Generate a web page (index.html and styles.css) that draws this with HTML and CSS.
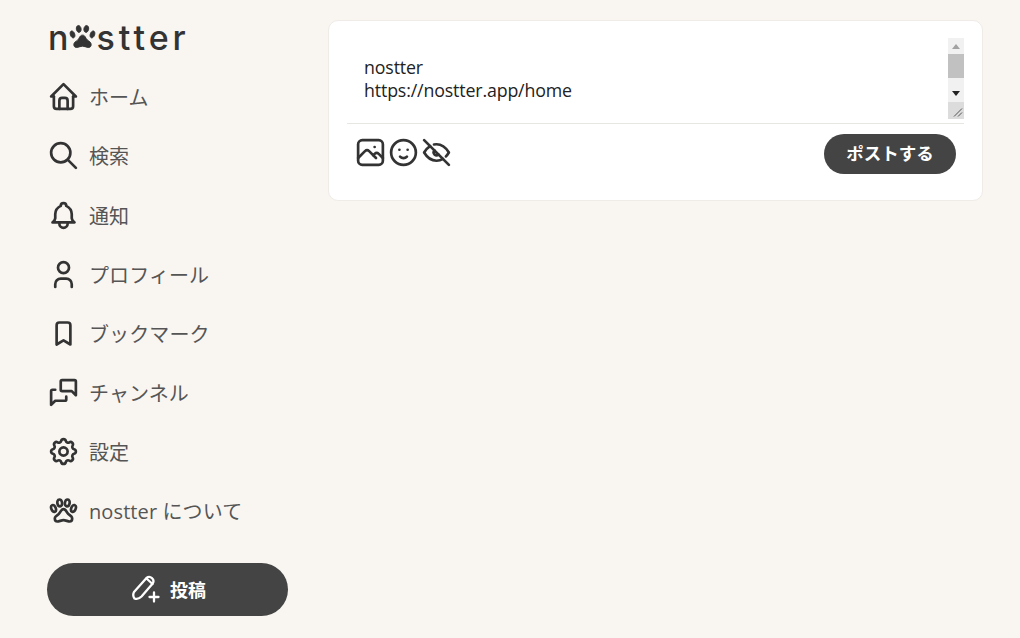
FILE: index.html
```html
<!DOCTYPE html>
<html lang="ja">
<head>
<meta charset="utf-8">
<title>nostter</title>
<link rel="stylesheet" href="styles.css">
</head>
<body>
<div class="page">
  <aside class="sidebar">
    <div class="logo">
      <span>n</span>
      <svg class="logo-paw" viewBox="0 0 24 24"><path d="M14.7 13.5c-1.1 -2 -1.441 -2.5 -2.7 -2.5c-1.259 0 -1.736 .755 -2.836 2.747c-.942 1.703 -2.846 1.845 -3.321 3.291c-.097 .265 -.145 .677 -.143 .962c0 1.176 .787 2 1.8 2c1.259 0 3 -1 4.5 -1s3.241 1 4.5 1c1.013 0 1.8 -.823 1.8 -2c0 -.285 -.049 -.697 -.146 -.962c-.475 -1.451 -2.512 -1.835 -3.454 -3.538z"/><path d="M20.188 8.082a1.039 1.039 0 0 0 -.406 -.082h-.015c-.735 .012 -1.56 .75 -1.993 1.866c-.519 1.335 -.28 2.7 .538 3.052c.129 .055 .267 .082 .406 .082c.739 0 1.575 -.742 2.011 -1.866c.516 -1.335 .273 -2.7 -.54 -3.052z"/><path d="M9.474 9c.055 0 .109 0 .163 -.011c.944 -.128 1.533 -1.346 1.32 -2.722c-.203 -1.297 -1.047 -2.267 -1.932 -2.267c-.055 0 -.109 0 -.163 .011c-.944 .128 -1.533 1.346 -1.32 2.722c.204 1.293 1.048 2.267 1.933 2.267z"/><path d="M16.456 6.733c.214 -1.376 -.375 -2.594 -1.32 -2.722a1.164 1.164 0 0 0 -.162 -.011c-.885 0 -1.728 .97 -1.93 2.267c-.214 1.376 .375 2.594 1.32 2.722c.054 .007 .108 .011 .162 .011c.885 0 1.73 -.974 1.93 -2.267z"/><path d="M5.69 12.918c.816 -.352 1.054 -1.719 .536 -3.052c-.436 -1.124 -1.271 -1.866 -2.009 -1.866c-.14 0 -.277 .027 -.407 .082c-.816 .352 -1.054 1.719 -.536 3.052c.436 1.124 1.271 1.866 2.009 1.866c.14 0 .277 -.027 .407 -.082z"/></svg>
      <span>stter</span>
    </div>
    <nav class="nav">
      <a class="nav-item"><svg class="icon" viewBox="0 0 24 24"><path d="M5 12l-2 0l9 -9l9 9l-2 0"/><path d="M5 12v7a2 2 0 0 0 2 2h10a2 2 0 0 0 2 -2v-7"/><path d="M9 21v-6a2 2 0 0 1 2 -2h2a2 2 0 0 1 2 2v6"/></svg><span>ホーム</span></a>
      <a class="nav-item"><svg class="icon" viewBox="0 0 24 24"><path d="M10 10m-7 0a7 7 0 1 0 14 0a7 7 0 1 0 -14 0"/><path d="M21 21l-6 -6"/></svg><span>検索</span></a>
      <a class="nav-item"><svg class="icon" viewBox="0 0 24 24"><path d="M10 5a2 2 0 1 1 4 0a7 7 0 0 1 4 6v3a4 4 0 0 0 2 3h-16a4 4 0 0 0 2 -3v-3a7 7 0 0 1 4 -6"/><path d="M9 17v1a3 3 0 0 0 6 0v-1"/></svg><span>通知</span></a>
      <a class="nav-item"><svg class="icon" viewBox="0 0 24 24"><path d="M8 7a4 4 0 1 0 8 0a4 4 0 0 0 -8 0"/><path d="M6 21v-2a4 4 0 0 1 4 -4h4a4 4 0 0 1 4 4v2"/></svg><span>プロフィール</span></a>
      <a class="nav-item"><svg class="icon" viewBox="0 0 24 24"><path d="M9 4h6a2 2 0 0 1 2 2v14l-5 -3l-5 3v-14a2 2 0 0 1 2 -2"/></svg><span>ブックマーク</span></a>
      <a class="nav-item"><svg class="icon" viewBox="0 0 24 24"><path d="M21 14l-3 -3h-7a1 1 0 0 1 -1 -1v-6a1 1 0 0 1 1 -1h9a1 1 0 0 1 1 1v10"/><path d="M14 15v2a1 1 0 0 1 -1 1h-7l-3 3v-10a1 1 0 0 1 1 -1h2"/></svg><span>チャンネル</span></a>
      <a class="nav-item"><svg class="icon" viewBox="0 0 24 24"><path d="M10.325 4.317c.426 -1.756 2.924 -1.756 3.35 0a1.724 1.724 0 0 0 2.573 1.066c1.543 -.94 3.31 .826 2.37 2.37a1.724 1.724 0 0 0 1.065 2.572c1.756 .426 1.756 2.924 0 3.35a1.724 1.724 0 0 0 -1.066 2.573c.94 1.543 -.826 3.31 -2.37 2.37a1.724 1.724 0 0 0 -2.572 1.065c-.426 1.756 -2.924 1.756 -3.35 0a1.724 1.724 0 0 0 -2.573 -1.066c-1.543 .94 -3.31 -.826 -2.37 -2.37a1.724 1.724 0 0 0 -1.065 -2.572c-1.756 -.426 -1.756 -2.924 0 -3.35a1.724 1.724 0 0 0 1.066 -2.573c-.94 -1.543 .826 -3.31 2.37 -2.37c1 .608 2.296 .07 2.572 -1.065"/><path d="M9 12a3 3 0 1 0 6 0a3 3 0 0 0 -6 0"/></svg><span>設定</span></a>
      <a class="nav-item"><svg class="icon" viewBox="0 0 24 24"><path d="M14.7 13.5c-1.1 -2 -1.441 -2.5 -2.7 -2.5c-1.259 0 -1.736 .755 -2.836 2.747c-.942 1.703 -2.846 1.845 -3.321 3.291c-.097 .265 -.145 .677 -.143 .962c0 1.176 .787 2 1.8 2c1.259 0 3 -1 4.5 -1s3.241 1 4.5 1c1.013 0 1.8 -.823 1.8 -2c0 -.285 -.049 -.697 -.146 -.962c-.475 -1.451 -2.512 -1.835 -3.454 -3.538z"/><path d="M20.188 8.082a1.039 1.039 0 0 0 -.406 -.082h-.015c-.735 .012 -1.56 .75 -1.993 1.866c-.519 1.335 -.28 2.7 .538 3.052c.129 .055 .267 .082 .406 .082c.739 0 1.575 -.742 2.011 -1.866c.516 -1.335 .273 -2.7 -.54 -3.052z"/><path d="M9.474 9c.055 0 .109 0 .163 -.011c.944 -.128 1.533 -1.346 1.32 -2.722c-.203 -1.297 -1.047 -2.267 -1.932 -2.267c-.055 0 -.109 0 -.163 .011c-.944 .128 -1.533 1.346 -1.32 2.722c.204 1.293 1.048 2.267 1.933 2.267z"/><path d="M16.456 6.733c.214 -1.376 -.375 -2.594 -1.32 -2.722a1.164 1.164 0 0 0 -.162 -.011c-.885 0 -1.728 .97 -1.93 2.267c-.214 1.376 .375 2.594 1.32 2.722c.054 .007 .108 .011 .162 .011c.885 0 1.73 -.974 1.93 -2.267z"/><path d="M5.69 12.918c.816 -.352 1.054 -1.719 .536 -3.052c-.436 -1.124 -1.271 -1.866 -2.009 -1.866c-.14 0 -.277 .027 -.407 .082c-.816 .352 -1.054 1.719 -.536 3.052c.436 1.124 1.271 1.866 2.009 1.866c.14 0 .277 -.027 .407 -.082z"/></svg><span>nostter について</span></a>
    </nav>
    <button class="compose"><svg class="compose-icon" viewBox="0 0 30 28"><path d="M2 17 14.500 3a4.200 4.200 0 0 1 6.200 5.500L9.500 21.500c-2 2-4.500 3-7 2-1.500-2-1.500-4.500-.5-6.500z"/><path d="M14.500 3.500 20.500 9"/><path d="M17.500 22h9M22 17.500v9"/></svg><span>投稿</span></button>
  </aside>
  <main class="main">
    <section class="card">
      <div class="editor">
        <div class="editor-text">nostter<br>https://nostter.app/home</div>
        <div class="scrollbar">
          <div class="sb-btn"><i class="arrow-up"></i></div>
          <div class="sb-thumb"></div>
          <div class="sb-track"></div>
          <div class="sb-btn sb-down"><i class="arrow-down"></i></div>
          <div class="sb-corner"><svg viewBox="0 0 16 16"><path d="M6 14 14 6M10 14l4-4"/></svg></div>
        </div>
      </div>
      <div class="toolbar">
        <div class="tools">
          <svg class="icon" viewBox="0 0 24 24"><path d="M15 8h.01"/><path d="M3 6a3 3 0 0 1 3 -3h12a3 3 0 0 1 3 3v12a3 3 0 0 1 -3 3h-12a3 3 0 0 1 -3 -3v-12z"/><path d="M3 16l5 -5c.928 -.893 2.072 -.893 3 0l5 5"/><path d="M14 14l1 -1c.928 -.893 2.072 -.893 3 0l3 3"/></svg>
          <svg class="icon" viewBox="0 0 24 24"><path d="M12 12m-9 0a9 9 0 1 0 18 0a9 9 0 1 0 -18 0"/><path d="M9 10l.01 0"/><path d="M15 10l.01 0"/><path d="M9.500 15a3.500 3.500 0 0 0 5 0"/></svg>
          <svg class="icon" viewBox="0 0 24 24"><path d="M10.585 10.587a2 2 0 0 0 2.829 2.828"/><path d="M16.681 16.673a8.717 8.717 0 0 1 -4.681 1.327c-3.6 0 -6.6 -2 -9 -6c1.272 -2.12 2.712 -3.678 4.32 -4.674m2.86 -1.146a9.055 9.055 0 0 1 1.82 -.18c3.6 0 6.6 2 9 6c-.666 1.11 -1.379 2.067 -2.138 2.87"/><path d="M3 3l18 18"/></svg>
        </div>
        <button class="post">ポストする</button>
      </div>
    </section>
  </main>
</div>
</body>
</html>
```
FILE: styles.css
```css
* { box-sizing: border-box; }
html, body { margin: 0; height: 100%; }
body {
  background: #f9f6f2;
  color: #333;
  font-family: "Open Sans", "Noto Sans CJK JP", sans-serif;
  overflow: hidden;
}
.page {
  display: flex;
  align-items: flex-start;
  gap: 40px;
  padding: 20px 37px 0 47px;
}
.sidebar {
  width: 241px;
  flex: none;
  display: flex;
  flex-direction: column;
}
.logo {
  height: 47.175px;
  display: flex;
  align-items: flex-start;
  padding: 0 0 0 1px;
  font-family: "Inter", sans-serif;
  font-size: 34px;
  font-weight: 500;
  line-height: 36px;
  letter-spacing: 4px;
  color: #333;
}
.logo-paw {
  width: 33px;
  height: 33px;
  margin: 0 -3px 0 -6px;
  flex: none;
  fill: #333;
  stroke: #333;
  stroke-width: .7;
}
.nav { display: flex; flex-direction: column; }
.nav-item {
  display: flex;
  align-items: center;
  gap: 9px;
  height: 59.150px;
  font-size: 20px;
  letter-spacing: .1px;
  color: #555;
}
.icon {
  width: 33px;
  height: 33px;
  flex: none;
  fill: none;
  stroke: #333;
  stroke-width: 1.950;
  stroke-linecap: round;
  stroke-linejoin: round;
}
.compose {
  margin-top: 22.625px;
  height: 53px;
  width: 241px;
  border: 0;
  border-radius: 27px;
  background: #444;
  color: #fff;
  display: flex;
  align-items: center;
  justify-content: center;
  gap: 8px;
  padding: 0 0 1px 3px;
  font-family: "Noto Sans CJK JP", sans-serif;
  font-size: 18px;
  font-weight: 700;
}
.compose-icon {
  width: 30px;
  height: 28px;
  fill: none;
  stroke: #fff;
  stroke-width: 2.300;
  stroke-linecap: round;
  stroke-linejoin: round;
}
.main { flex: 1; min-width: 0; }
.card {
  height: 181px;
  background: #fff;
  border: 1px solid #efebe6;
  border-radius: 10px;
  padding: 17px 18px 0 18px;
}
.editor {
  display: flex;
  height: 86px;
  border-bottom: 1px solid #e8e6e3;
  padding-bottom: 4px;
}
.editor-text {
  flex: 1;
  padding: 18px 17px 0;
  font-size: 17.800px;
  letter-spacing: -.15px;
  line-height: 23px;
  color: #222;
}
.scrollbar {
  width: 16px;
  display: flex;
  flex-direction: column;
  background: #f1f1f1;
}
.sb-btn {
  height: 16px;
  display: flex;
  align-items: center;
  justify-content: center;
}
.sb-down { height: 18px; }
.sb-thumb { height: 24px; background: #c1c1c1; }
.sb-track { flex: 1; }
.sb-corner { height: 17px; background: #dcdcdc; }
.sb-corner svg {
  display: block;
  width: 16px;
  height: 17px;
  fill: none;
  stroke: #555;
  stroke-width: 1;
}
.arrow-up, .arrow-down {
  display: block;
  border-left: 4px solid transparent;
  border-right: 4px solid transparent;
}
.arrow-up { border-bottom: 5px solid #a3a3a3; }
.arrow-down { border-top: 5px solid #222; }
.toolbar {
  display: flex;
  align-items: center;
  justify-content: space-between;
  padding: 10px 8px 0 7px;
}
.tools { display: flex; margin-bottom: 4px; }
.post {
  width: 132px;
  height: 40px;
  border: 0;
  border-radius: 20px;
  background: #444;
  color: #fff;
  font-family: "Noto Sans CJK JP", sans-serif;
  font-size: 17.500px;
  font-weight: 700;
  padding: 0 0 3px;
}
```
